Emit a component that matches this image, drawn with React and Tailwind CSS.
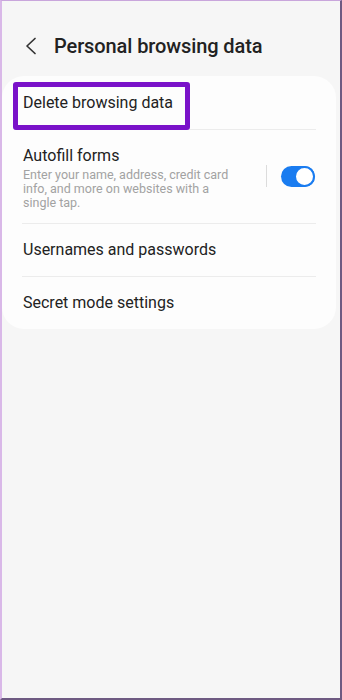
import React from 'react';

const rows = [
  { id: 'users', title: 'Usernames and passwords' },
  { id: 'secret', title: 'Secret mode settings' },
];

const Toggle = () => (
  <div className="flex items-center">
    <div className="w-px h-[22px] bg-[#dcdcdc] mr-[14px]" />
    <div className="relative w-[34px] h-[21px] rounded-full bg-[#1a7cf0]">
      <div className="absolute right-0 top-0 w-[21px] h-[21px] rounded-full bg-white border-[2px] border-[#1a7cf0]" />
    </div>
  </div>
);

export default function App() {
  return (
    <div
      className="h-[700px] w-[342px] bg-[#f6f6f6] border-l-2 border-t border-l-[#d9b8e8] border-t-[#c9a6dc] border-r-2 border-b-2 border-r-[#6e5a82] border-b-[#6e5a82] text-[#222222] overflow-hidden"
      style={{ fontFamily: 'Roboto, "Noto Sans", sans-serif' }}
    >
      <div className="flex items-center h-[75px] pt-[15px] pl-[22px]">
        <svg width="14" height="18" viewBox="0 0 14 18" fill="none" className="mr-[16px]">
          <path d="M11 1.5 L3 9 L11 16.5" stroke="#333333" strokeWidth="1.7" strokeLinecap="round" strokeLinejoin="round" />
        </svg>
        <h1 className="text-[20px] font-medium tracking-[-0.1px]">Personal browsing data</h1>
      </div>

      <div className="mr-[4px] bg-[#fdfdfd] rounded-[22px]">
        <div className="relative h-[53px] flex items-center px-[21px]">
          <div className="absolute left-[11px] top-[6px] w-[177px] h-[48px] border-[5px] border-[#7a12c9] rounded-[3px]" />
          <span className="text-[16px]">Delete browsing data</span>
        </div>
        <div className="mx-[20px] h-px bg-[#ececec]" />

        <div className="flex items-center px-[21px] pt-[16px] pb-[13px]">
          <div className="flex-1">
            <div className="text-[16px] leading-[20px]">Autofill forms</div>
            <p className="w-[212px] text-[12.5px] leading-[14px] text-[#a2a2a2] mt-[2px]">
              Enter your name, address, credit card info, and more on websites with a single tap.
            </p>
          </div>
          <div className="-mt-[4px]">
            <Toggle />
          </div>
        </div>

        {rows.map((row) => (
          <div key={row.id}>
            <div className="mx-[20px] h-px bg-[#ececec]" />
            <div className="h-[52px] flex items-center px-[21px]">
              <span className="text-[16px]">{row.title}</span>
            </div>
          </div>
        ))}
      </div>
    </div>
  );
}
